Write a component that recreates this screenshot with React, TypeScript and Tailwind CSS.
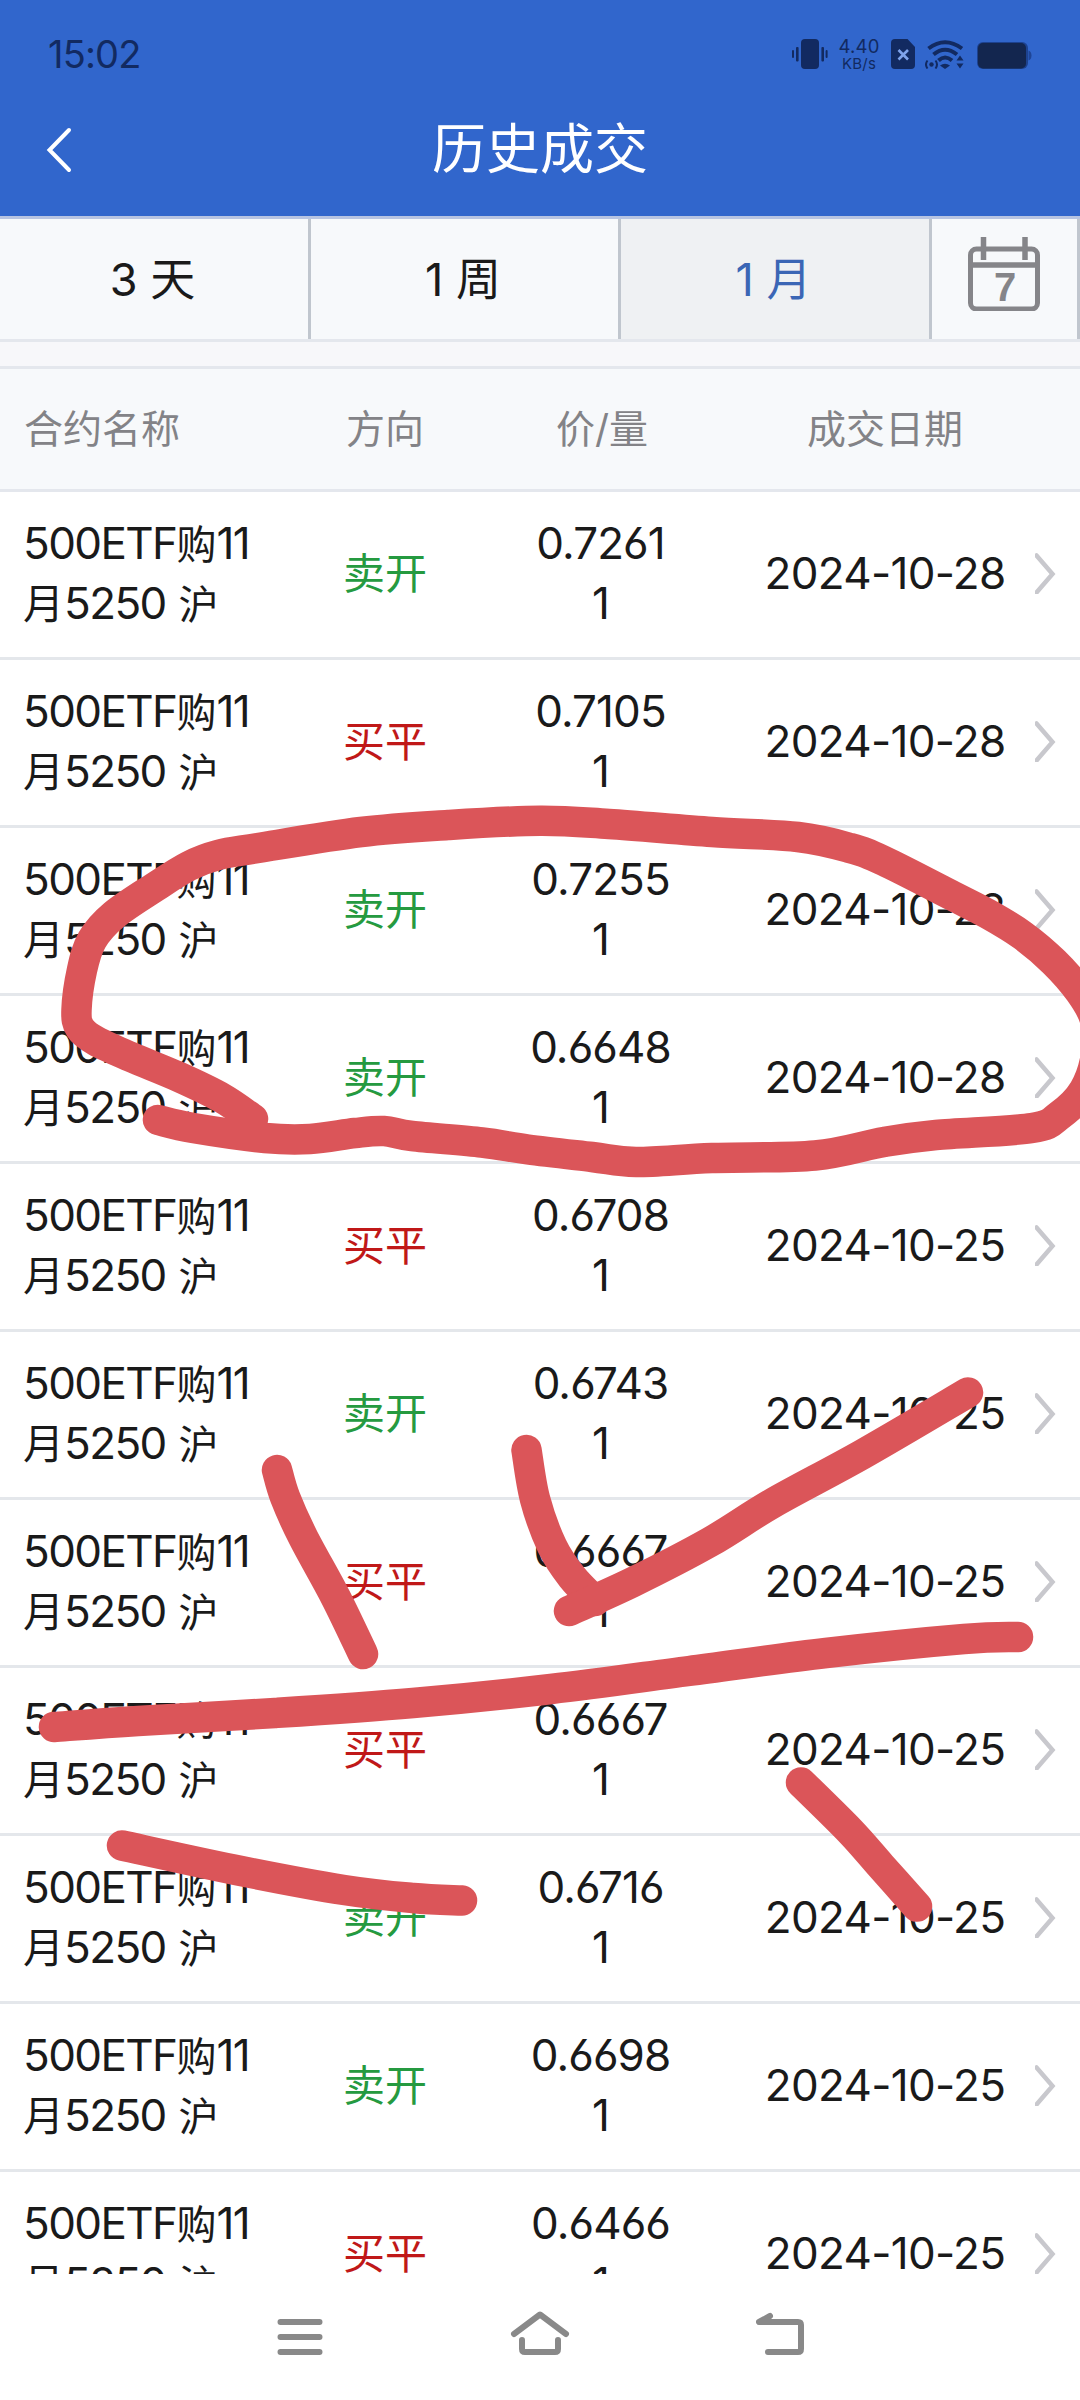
import { clsx } from "clsx";

type Trade = {
  side: "sell" | "buy";
  price: string;
  date: string;
};

type Point = [number, number];

const trades: Trade[] = [
  { side: "sell", price: "0.7261", date: "2024-10-28" },
  { side: "buy", price: "0.7105", date: "2024-10-28" },
  { side: "sell", price: "0.7255", date: "2024-10-28" },
  { side: "sell", price: "0.6648", date: "2024-10-28" },
  { side: "buy", price: "0.6708", date: "2024-10-25" },
  { side: "sell", price: "0.6743", date: "2024-10-25" },
  { side: "buy", price: "0.6667", date: "2024-10-25" },
  { side: "buy", price: "0.6667", date: "2024-10-25" },
  { side: "sell", price: "0.6716", date: "2024-10-25" },
  { side: "sell", price: "0.6698", date: "2024-10-25" },
  { side: "buy", price: "0.6466", date: "2024-10-25" },
];

// Pen strokes drawn over the list
const strokes: Point[][] = [
  [
    [253, 1119], [222, 1098], [179, 1077], [131, 1057], [96, 1041], [80, 1028], [76.5, 1010],
    [82, 970], [92, 940], [114, 915], [155, 887], [189, 866], [218, 855], [258, 848],
    [361, 832], [448, 825], [540, 820.7], [609, 824], [712, 832], [798, 837], [850, 848],
    [884, 861], [953, 896], [988, 914], [1022, 935], [1054, 962], [1080, 992], [1095, 1020],
    [1096, 1055], [1084, 1090], [1060, 1115], [1032, 1128], [936, 1135], [884, 1142],
    [815, 1155.5], [712, 1158], [636, 1162], [592, 1157], [528, 1149.5], [482, 1142.5],
    [412, 1136], [384, 1131], [355, 1133], [310, 1139], [265, 1138], [193, 1128], [158, 1120],
  ],
  [[277, 1470], [285, 1497], [303, 1537], [336, 1598], [363, 1654]],
  [[526.5, 1450], [535, 1499], [552, 1546], [572, 1577], [595, 1601]],
  [[569, 1611], [633, 1582], [710, 1542], [773, 1503], [863, 1454], [968, 1392.5]],
  [
    [54, 1727], [138, 1721], [275, 1713], [413, 1703], [551, 1689], [689, 1671],
    [826, 1653], [964, 1639], [1018, 1637],
  ],
  [[122, 1845.5], [241, 1871], [344, 1890], [413, 1898], [462, 1900.5]],
  [[801, 1782.5], [850, 1831], [881, 1866], [917, 1906.5]],
];

const smoothPath = (points: Point[]) => {
  let d = `M${points[0][0]} ${points[0][1]}`;
  for (let i = 0; i < points.length - 1; i++) {
    const p0 = points[i - 1] ?? points[i];
    const p1 = points[i];
    const p2 = points[i + 1];
    const p3 = points[i + 2] ?? p2;
    d += ` C${p1[0] + (p2[0] - p0[0]) / 6} ${p1[1] + (p2[1] - p0[1]) / 6}`;
    d += ` ${p2[0] - (p3[0] - p1[0]) / 6} ${p2[1] - (p3[1] - p1[1]) / 6} ${p2[0]} ${p2[1]}`;
  }
  return d;
};

const StatusBar = () => (
  <div className="flex h-[84px] items-start text-[#122a61]">
    <div className="ml-12 mt-[31px] text-[38px] leading-[46px] tracking-[-0.8px]">15:02</div>
    <div className="ml-auto mr-12 mt-[39px] flex h-[30px] items-start">
      <svg width="36" height="30" viewBox="0 0 36 30" fill="currentColor">
        <rect x="9" y="0" width="18" height="30" rx="4" />
        <rect x="0" y="11" width="2" height="8" rx="1" />
        <rect x="4" y="8" width="2.6" height="14.5" rx="1" />
        <rect x="29.4" y="8" width="2.6" height="14.5" rx="1" />
        <rect x="33.6" y="11" width="2" height="8" rx="1" />
      </svg>
      <div className="ml-2.5 mr-[11px] flex w-[42px] flex-col items-center">
        <span className="text-[18.5px] leading-[14px] tracking-[0.2px]">4.40</span>
        <span className="mt-1 text-[15px] leading-[13px] tracking-[0.2px]">KB/s</span>
      </div>
      <svg width="24" height="30" viewBox="0 0 24 30">
        <path d="M4 0h12.5l7.5 8v18a4 4 0 0 1-4 4H4a4 4 0 0 1-4-4V4a4 4 0 0 1 4-4z" fill="currentColor" />
        <path d="M7.5 11l9.5 9.5M17 11l-9.5 9.5" stroke="#7fa3ea" strokeWidth="2.6" />
      </svg>
      <svg className="ml-2.5" width="39" height="30" viewBox="0 0 39 30" fill="none" stroke="currentColor">
        <path d="M3.5 9.5Q20 -3 37 9.5" strokeWidth="4" />
        <path d="M8.5 15.5Q20 6 32 15.5" strokeWidth="4" />
        <path d="M13.5 21.5Q20 15.5 27 21.5" strokeWidth="4" />
        <path d="M15 26.5q5-3.5 10 0l-5 3.5z" fill="currentColor" stroke="none" />
        <circle cx="6.5" cy="25.5" r="2.2" fill="currentColor" stroke="none" />
        <path d="M2.5 21.5q-3 4 0 8M10.5 21.5q3 4 0 8" strokeWidth="2" />
        <path d="M31.5 21.5l3.5-5 3.5 5zM31.5 24.5l3.5 5 3.5-5z" fill="currentColor" stroke="none" />
      </svg>
      <svg className="ml-[13px] mt-[3px]" width="55" height="27" viewBox="0 0 55 27">
        <rect x="0" y="0" width="51" height="27" rx="6" fill="#1d428f" />
        <rect x="1" y="1" width="48" height="25.5" rx="5" fill="#13264f" />
        <path d="M51.5 8.5q3 1 3 5t-3 5z" fill="#1f4596" />
      </svg>
    </div>
  </div>
);

const Header = () => (
  <header className="h-[216px] bg-[#3166cc]">
    <StatusBar />
    <div className="grid h-[132px] grid-cols-3 items-center">
      <svg className="ml-[46px]" width="28" height="46" viewBox="0 0 28 46" fill="none">
        <path d="M23 3L3.5 23 23 43" stroke="#fff" strokeWidth="4" strokeLinecap="round" />
      </svg>
      <h1 className="text-center text-[54px] leading-[60px] text-white">历史成交</h1>
    </div>
  </header>
);

const CalendarIcon = () => (
  <svg width="72" height="74" viewBox="0 0 72 74" fill="none" stroke="#858589" strokeWidth="5">
    <rect x="2.5" y="12" width="67" height="60" rx="6" />
    <path d="M2.5 28h67M15.5 0v23M57 0v23" strokeWidth="5.5" />
    <text
      x="37"
      y="63.5"
      textAnchor="middle"
      fill="#858589"
      stroke="none"
      className="font-['Liberation_Sans'] text-[40px] font-bold"
    >
      7
    </text>
  </svg>
);

const Tabs = () => (
  <nav className="flex h-[126px] border-b-[3px] border-t-[3px] border-b-[#e4e7ed] border-t-[#b7c4e2] bg-[#f7f9fb] text-[45px] text-[#1a1a1a] [word-spacing:5px]">
    <button className="w-[311px] border-r-[3px] border-[#c0c6ce] pr-[3px] pt-0.5">3 天</button>
    <button className="w-[310px] border-r-[3px] border-[#c0c6ce] pr-[3px] pt-0.5">1 周</button>
    <button className="w-[311px] border-r-[3px] border-[#c0c6ce] bg-[#eff1f3] pr-[3px] pt-0.5 text-[#3b66b5]">1 月</button>
    <button className="flex w-[148px] justify-center border-r-[3px] border-[#c0c6ce] pr-px pt-[18px]">
      <CalendarIcon />
    </button>
  </nav>
);

const TableHead = () => (
  <div className="mt-6 grid h-[126px] grid-cols-[301px_168px_266px_300px_45px] items-center border-y-[3px] border-[#e4e7ed] bg-[#f7f9fb] text-[39px] text-[#838387]">
    <span className="pl-6">合约名称</span>
    <span className="text-center">方向</span>
    <span className="text-center">价/量</span>
    <span className="text-center">成交日期</span>
  </div>
);

const TradeRow = ({ side, price, date }: Trade) => (
  <div className="grid h-[168px] shrink-0 grid-cols-[301px_168px_266px_300px_45px] items-center border-b-[3px] border-[#e4e7eb] pb-[3px] text-[44px] leading-[60px] text-[#1a1a1a]">
    <div className="pl-[23px] tracking-[-1.6px]">
      <div className="h-[60px]">
        500ETF<span className="text-[40px] leading-none tracking-normal">购</span>11
      </div>
      <div className="h-[60px]">
        <span className="text-[41px] leading-none tracking-normal">月</span>5250{" "}
        <span className="ml-0.5 text-[40px] leading-none tracking-normal">沪</span>
      </div>
    </div>
    <div
      className={clsx(
        "pt-px text-center text-[42px]",
        side === "sell" ? "text-[#259a40]" : "text-[#c01818]"
      )}
    >
      {side === "sell" ? "卖开" : "买平"}
    </div>
    <div className="pr-[3px] text-center tracking-[-0.9px]">
      <div>{price}</div>
      <div>1</div>
    </div>
    <div className="text-center tracking-[-0.7px]">{date}</div>
    <svg width="22" height="42" viewBox="0 0 22 42" fill="none">
      <path d="M1.5 3.500L17.500 22 1.500 40.500" stroke="#c8c8cd" strokeWidth="4.5" strokeLinecap="round" />
    </svg>
  </div>
);

const SystemNav = () => (
  <footer className="flex h-[126px] items-start justify-center gap-[186px] bg-white pt-9">
    <svg width="54" height="50" viewBox="0 0 54 50" fill="none" stroke="#898989" strokeWidth="6" strokeLinecap="round">
      <path d="M10.5 12h39M10.5 27h39M10.5 42h39" />
    </svg>
    <svg width="60" height="50" viewBox="0 0 60 50" fill="none" stroke="#898989" strokeWidth="6" strokeLinecap="round">
      <path d="M4 24L30 4.5 56 24" strokeLinejoin="round" />
      <path d="M12 30v9q0 3 3 3h30q3 0 3-3v-9" />
    </svg>
    <svg width="54" height="50" viewBox="0 0 54 50" fill="none" stroke="#898989" strokeWidth="6" strokeLinecap="round" strokeLinejoin="round">
      <path d="M14 6L3 12h39q3 0 3 3v24q0 3-3 3H12" />
    </svg>
  </footer>
);

const App = () => {
  return (
    <div className="relative flex h-[2400px] w-[1080px] flex-col overflow-hidden bg-[#f7f7fa] font-[Inter,'Noto_Sans_CJK_SC',sans-serif] [font-feature-settings:'cv03','cv06']">
      <Header />
      <Tabs />
      <TableHead />
      <main className="flex min-h-0 flex-1 flex-col overflow-hidden bg-white">
        {trades.map((trade, index) => (
          <TradeRow key={index} {...trade} />
        ))}
      </main>
      <SystemNav />

      {/* Hand-drawn marks */}
      <svg
        className="pointer-events-none absolute inset-0"
        width="1080"
        height="2400"
        viewBox="0 0 1080 2400"
        fill="none"
        stroke="#db5559"
        strokeWidth="30.5"
        strokeLinecap="round"
        strokeLinejoin="round"
      >
        {strokes.map((points, index) => (
          <path key={index} d={smoothPath(points)} />
        ))}
      </svg>
    </div>
  );
};

export default App;
